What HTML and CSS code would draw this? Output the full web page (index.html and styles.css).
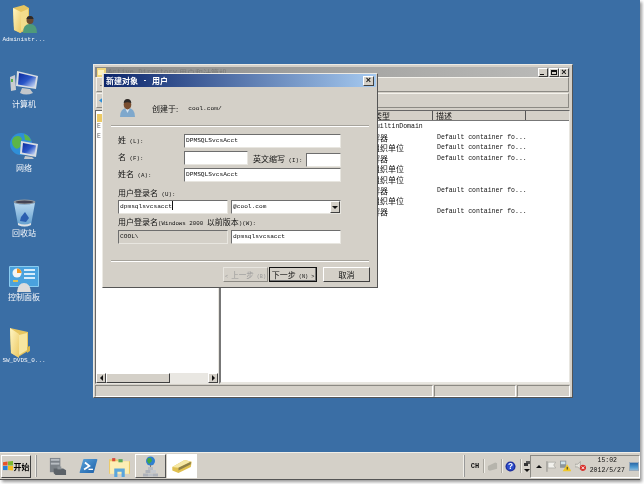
FILE: index.html
```html
<!DOCTYPE html>
<html lang="zh-CN">
<head>
<meta charset="utf-8">
<title>新建对象 - 用户</title>
<link rel="stylesheet" href="styles.css">
</head>
<body>
<svg class="defs" width="0" height="0"><defs>
  <linearGradient id="scr" x1="0" y1="0" x2="1" y2="1"><stop offset="0" stop-color="#0c2a9c"/><stop offset=".5" stop-color="#2a56c8"/><stop offset="1" stop-color="#e4eefa"/></linearGradient>
  <linearGradient id="fold" x1="0" y1="0" x2="1" y2="1"><stop offset="0" stop-color="#fff6c4"/><stop offset="1" stop-color="#ecc964"/></linearGradient>
  <linearGradient id="bin" x1="0" y1="0" x2="0" y2="1"><stop offset="0" stop-color="#b8d8f0"/><stop offset="1" stop-color="#5f9ccc"/></linearGradient>
  <linearGradient id="ps" x1="0" y1="0" x2="1" y2="1"><stop offset="0" stop-color="#5aa4dc"/><stop offset="1" stop-color="#1c5ea6"/></linearGradient>
</defs></svg>
<div class="screen">
  <main class="desktop">
    <div class="icon icon-admin">
      <svg width="25" height="28" viewBox="0 0 25 28"><path d="M1 3 L12 0 L17 3 L17 24 L8 28 L2 25Z" fill="#e6c560"/><path d="M1 3 L9 7 L9 28 L2 25Z" fill="url(#fold)"/><path d="M9 7 L16 4 L16 22 L9 26Z" fill="#f3dd8c"/><ellipse cx="18" cy="15" rx="3.500" ry="4" fill="#6b4a30"/><path d="M18 11 q3 0 3.500 3 l-7 0 q.5-3 3.500-3Z" fill="#2e2a28"/><path d="M11 28 q0-9 7-9 q7 0 7 9Z" fill="#4f9a7a"/></svg>
      <span class="mono light">Administr...</span>
    </div>
    <div class="icon icon-computer">
      <svg width="28" height="25" viewBox="0 0 28 25"><path d="M0 6 L5 4 L6 19 L1 20Z" fill="#c9ccd0"/><rect x="1" y="8" width="2" height="3" fill="#5ab04a"/><path d="M7 0 L28 5 L26 18 L6 15Z" fill="#d8dde2"/><path d="M9 2 L26 6 L24.500 16.500 L8 13.500Z" fill="url(#scr)"/><path d="M12 17 L20 18 L23 22 Q16 25 10 22Z" fill="#c3c7cb"/></svg>
      <span class="cjk light">计算机</span>
    </div>
    <div class="icon icon-network">
      <svg width="28" height="27" viewBox="0 0 28 27"><circle cx="11" cy="11" r="11" fill="#2f8fd8"/><path d="M4 4 Q10 1 12 6 Q9 10 11 13 Q7 18 4 14 Q0 9 4 4Z" fill="#5cb548"/><path d="M14 1 Q20 3 21 8 L15 7Z" fill="#5cb548"/><path d="M11 8 L28 11 L26 24 L10 21Z" fill="#d8dde2"/><path d="M13 10 L26 12.500 L24.500 22 L12 19.500Z" fill="url(#scr)"/><path d="M15 23 L22 24 L24 26 L14 26Z" fill="#c3c7cb"/></svg>
      <span class="cjk light">网络</span>
    </div>
    <div class="icon icon-bin">
      <svg width="23" height="30" viewBox="0 0 23 30"><ellipse cx="11.500" cy="4" rx="11" ry="2.500" fill="#8f979e"/><ellipse cx="11.500" cy="4" rx="9" ry="1.500" fill="#445"/><path d="M1 5 L5 27 Q11.500 30 18 27 L22 5 Q11.500 8 1 5Z" fill="url(#bin)"/><path d="M8 19 L12 14 L16 20 L13 24 L7 23Z" fill="#2c5fb0"/><path d="M5 25 Q11.500 28 18 25 L18 27 Q11.500 30 5 27Z" fill="#e0e2e4"/></svg>
      <span class="cjk light">回收站</span>
    </div>
    <div class="icon icon-panel">
      <svg width="30" height="27" viewBox="0 0 30 27"><rect x="0" y="0" width="30" height="21" rx="1" fill="#8accf0"/><rect x="1" y="1" width="28" height="19" fill="#4aa2de"/><circle cx="8" cy="7" r="4.500" fill="#f4f4f4"/><path d="M8 7 V2.500 A4.500 4.500 0 0 1 12.500 7Z" fill="#f09a28"/><rect x="15" y="3" width="11" height="2" fill="#d6ecfa"/><rect x="15" y="7" width="11" height="2" fill="#d6ecfa"/><rect x="15" y="11" width="11" height="2" fill="#d6ecfa"/><rect x="4" y="14" width="5" height="2" fill="#e0c050"/><path d="M8 26 Q9 17 15 17 Q21 17 22 26Z" fill="#dcdcdc"/></svg>
      <span class="cjk light">控制面板</span>
    </div>
    <div class="icon icon-sw">
      <svg width="20" height="31" viewBox="0 0 20 31"><path d="M0 1 L9 3 L18 5 L18 24 L8 30 L1 26Z" fill="#e6c560"/><path d="M0 1 L9 7 L9 31 L1 26Z" fill="url(#fold)"/><path d="M9 8 L17 6 L17 23 L9 28Z" fill="#f7e6a0"/><path d="M17 20 L20 19 L20 24 L17 26Z" fill="#d8b850"/></svg>
      <span class="mono light">SW_DVDS_0...</span>
    </div>

    <section class="window main-window">
      <header class="win-title">
        <svg class="win-app" width="9" height="9" viewBox="0 0 9 9"><rect width="9" height="9" fill="#f0d67c"/><rect x="1" y="2" width="6" height="5" fill="#fff4c0"/></svg>
        <span class="mono faded title-mono">Active Directory</span>
        <span class="cjk faded">用户和计算机</span>
        <div class="win-controls">
          <span class="ctl"><i class="min"></i></span>
          <span class="ctl"><i class="max"></i></span>
          <span class="ctl x">×</span>
        </div>
      </header>
      <div class="bar bar-first"><span class="mono">.</span></div>
      <div class="bar">
        <svg width="7" height="9" viewBox="0 0 7 9"><path d="M6 0 L0 4.500 L6 9Z" fill="#2d8fd8"/></svg>
      </div>
      <div class="panes">
        <aside class="tree">
          <div class="tree-body">
            <div class="tree-row"><svg width="8" height="8" viewBox="0 0 8 8"><rect width="8" height="8" fill="#ecc964"/></svg></div>
            <div class="tree-row mono">E</div>
            <div class="tree-row mono">E</div>
          </div>
          <div class="hscroll">
            <span class="arrow"><i class="tri-l"></i></span>
            <span class="thumb"></span>
            <span class="track"></span>
            <span class="arrow"><i class="tri-r"></i></span>
          </div>
        </aside>
        <div class="list">
          <div class="list-head">
            <span class="col col-type"><span class="cjk">类型</span></span>
            <span class="col col-desc"><span class="cjk">描述</span></span>
            <span class="col col-rest"></span>
          </div>
          <div class="list-row"><span class="cell-type mono">builtinDomain</span></div>
          <div class="list-row"><span class="cell-type cjk">容器</span><span class="cell-desc mono">Default container fo...</span></div>
          <div class="list-row"><span class="cell-type cjk">组织单位</span><span class="cell-desc mono">Default container fo...</span></div>
          <div class="list-row"><span class="cell-type cjk">容器</span><span class="cell-desc mono">Default container fo...</span></div>
          <div class="list-row"><span class="cell-type cjk">组织单位</span></div>
          <div class="list-row"><span class="cell-type cjk">组织单位</span></div>
          <div class="list-row"><span class="cell-type cjk">容器</span><span class="cell-desc mono">Default container fo...</span></div>
          <div class="list-row"><span class="cell-type cjk">组织单位</span></div>
          <div class="list-row"><span class="cell-type cjk">容器</span><span class="cell-desc mono">Default container fo...</span></div>
        </div>
      </div>
      <footer class="status">
        <span class="st st-a"></span><span class="st st-b"></span><span class="st st-c"></span>
      </footer>
    </section>

    <section class="window dialog">
      <header class="dlg-title">
        <span class="cjk bold">新建对象</span><span class="mono bold dash">-</span><span class="cjk bold">用户</span>
        <span class="ctl dlg-x">×</span>
      </header>
      <div class="dlg-body">
        <div class="created">
          <svg width="15" height="20" viewBox="0 0 15 18"><path d="M0 18 Q0 9 7.500 9 Q15 9 15 18Z" fill="#7fa8cc"/><path d="M5 9 L7.500 14 L10 9Z" fill="#d6e4ef"/><ellipse cx="7.500" cy="5.500" rx="3.800" ry="5" fill="#7a4e30"/><path d="M3.700 4 Q4 0 7.500 0 Q11 0 11.300 4 Q7.500 2.500 3.700 4Z" fill="#2e2a28"/></svg>
          <span class="cjk">创建于:</span>
          <span class="mono created-path">cool.com/</span>
        </div>
        <div class="rule"></div>
        <div class="form">
          <div class="frow">
            <label class="flabel"><span class="cjk">姓</span><span class="mono"> (L):</span></label>
            <div class="input w-full mono">DPMSQLSvcsAcct</div>
          </div>
          <div class="frow">
            <label class="flabel"><span class="cjk">名</span><span class="mono"> (F):</span></label>
            <div class="input w-first"></div>
            <label class="ini-label"><span class="cjk">英文缩写</span><span class="mono"> (I):</span></label>
            <div class="input w-ini"></div>
          </div>
          <div class="frow">
            <label class="flabel"><span class="cjk">姓名</span><span class="mono"> (A):</span></label>
            <div class="input w-full mono">DPMSQLSvcsAcct</div>
          </div>
        </div>
        <div class="blk-label"><span class="cjk">用户登录名</span><span class="mono"> (U):</span></div>
        <div class="login-row">
          <div class="input w-half mono">dpmsqlsvcsacct<i class="caret"></i></div>
          <div class="input w-half select mono">@cool.com<span class="drop"><i class="tri-d"></i></span></div>
        </div>
        <div class="blk-label second"><span class="cjk">用户登录名</span><span class="mono">(Windows 2000 </span><span class="cjk">以前版本</span><span class="mono">)(W):</span></div>
        <div class="login-row">
          <div class="input w-half disabled mono">COOL\</div>
          <div class="input w-half mono">dpmsqlsvcsacct</div>
        </div>
        <div class="rule rule-bottom"></div>
        <div class="buttons">
          <button class="btn off"><span class="mono">&lt; </span><span class="cjk">上一步</span><span class="mono"> (B)</span></button>
          <button class="btn default"><span class="cjk">下一步</span><span class="mono"> (N) &gt;</span></button>
          <button class="btn cancel"><span class="cjk">取消</span></button>
        </div>
      </div>
    </section>
  </main>

  <nav class="taskbar">
    <button class="start">
      <svg width="10" height="10" viewBox="0 0 11 11"><path d="M0 1.500 L5 .5 V5 H0Z" fill="#e8532b"/><path d="M5.500 .5 L11 0 V5 H5.500Z" fill="#7cb82f"/><path d="M0 5.500 H5 V10 L0 10Z" fill="#2a7fd8"/><path d="M5.500 5.500 H11 V10.500 L5.500 10Z" fill="#f6c021"/></svg>
      <span class="cjk bold">开始</span>
    </button>
    <span class="grip"></span>
    <div class="tasks">
      <span class="task"><svg width="19" height="21" viewBox="0 0 20 20"><rect x="2" y="1" width="11" height="15" fill="#7c8288"/><rect x="3" y="2" width="9" height="2" fill="#b8bdc2"/><rect x="3" y="6" width="9" height="2" fill="#b8bdc2"/><path d="M6 12 H16 L19 14 V19 H8 L6 17Z" fill="#5c6268"/><rect x="10" y="10" width="4" height="3" fill="#8e9499"/></svg></span>
      <span class="task"><svg width="19" height="16" viewBox="0 0 20 18"><path d="M4 2 Q4 1 5 1 H19 Q20 1 20 2 L16 16 Q16 17 15 17 H1 Q0 17 0 16Z" fill="url(#ps)"/><path d="M6 5 L11 9 L5 13" fill="none" stroke="#fff" stroke-width="2"/><rect x="10" y="12" width="5" height="1.500" fill="#fff"/></svg></span>
      <span class="task"><svg width="21" height="21" viewBox="0 0 20 20"><path d="M0 3 H8 L9 5 H20 V17 H0Z" fill="#eccb6c"/><path d="M1 5 H19 V17 H1Z" fill="#fdeeb4"/><rect x="3" y="2" width="3" height="3" fill="#d84a3a"/><rect x="9" y="3" width="4" height="3" fill="#5aa858"/><path d="M5 12 H15 V20 H12 V15 H8 V20 H5Z" fill="#5ba6dc"/></svg></span>
      <span class="task active-raised"><svg width="17" height="21" viewBox="0 0 17 21"><circle cx="8.500" cy="5" r="4.500" fill="#2f7fd0"/><path d="M6 2 L9 2 L10 5 L7 8 L5 5Z" fill="#44a840"/><rect x="8" y="9" width="1" height="3" fill="#777"/><rect x="6" y="11" width="5" height="3" fill="#b8bcc4"/><rect x="3.500" y="14" width="5" height="3" fill="#aeb2ba"/><rect x="9" y="14" width="5" height="3" fill="#c4c8ce"/><rect x="1" y="17.500" width="5" height="3" fill="#aeb2ba"/><rect x="6" y="17.500" width="5" height="3" fill="#bcc0c6"/><rect x="11" y="17.500" width="5" height="3" fill="#aeb2ba"/></svg></span>
      <span class="task active-on"><svg width="22" height="15" viewBox="0 0 22 17"><path d="M0 9 L14 1 L22 3 L21 9 L7 16 L0 13Z" fill="#e0c050"/><path d="M0 9 L14 1 L21 3 L7 10Z" fill="#f6e8a6"/><path d="M7 10 L21 3 L21 6 L7 13Z" fill="#8d7f48"/></svg></span>
    </div>
    <div class="tray-left">
      <span class="grip"></span>
      <span class="mono lang">CH</span>
      <span class="sep"></span>
      <svg width="11" height="11" viewBox="0 0 12 11"><path d="M1 5 L9 1 L11 2 V8 L3 10 L1 9Z" fill="#b6b4ac"/></svg>
      <span class="sep"></span>
      <svg width="11" height="11" viewBox="0 0 12 12"><circle cx="6" cy="6" r="5.500" fill="#1f2f9c"/><circle cx="6" cy="6" r="4" fill="#2c4dcc"/><text x="6" y="9" class="svg-q" text-anchor="middle">?</text></svg>
      <span class="sep"></span>
      <span class="mini"><svg width="6" height="5" viewBox="0 0 6 5"><rect x="2" y="0" width="4" height="3" fill="#555"/><rect x="0" y="2" width="4" height="3" fill="#333"/></svg><i class="tri-d"></i></span>
    </div>
    <div class="tray">
      <i class="tri-up"></i>
      <svg width="11" height="11" viewBox="0 0 11 11"><path d="M1 0 V11" stroke="#8a8a84" stroke-width="1"/><path d="M2 1 H10 L8 4 L10 7 H2Z" fill="#f2f1ec" stroke="#9a9a94" stroke-width=".6"/></svg>
      <svg width="12" height="12" viewBox="0 0 13 12"><rect x="0" y="0" width="7" height="8" fill="#8c969c"/><rect x="1" y="1" width="5" height="3" fill="#cfe2ea"/><path d="M8 4 L13 12 H3Z" fill="#f0c828"/><rect x="7.600" y="7" width="1" height="3" fill="#222"/></svg>
      <svg width="12" height="12" viewBox="0 0 13 12"><path d="M0 4 H3 L6 1 V10 L3 7 H0Z" fill="#e6e4dc" stroke="#8a8a84" stroke-width=".6"/><circle cx="9" cy="8" r="3.500" fill="#d8302c"/><path d="M7.500 6.500 L10.500 9.500 M10.500 6.500 L7.500 9.500" stroke="#fff"/></svg>
      <div class="clock"><span class="mono">15:02</span><span class="mono">2012/5/27</span></div>
      <span class="show-desk"></span>
    </div>
  </nav>
</div>
</body>
</html>
```
FILE: styles.css
```css
* { box-sizing: border-box; }
html, body { margin: 0; padding: 0; background: #fff; }
body { width: 644px; height: 484px; overflow: hidden; }
.defs { position: absolute; }
.screen { width: 640px; height: 480px; display: flex; flex-direction: column; box-shadow: 2px 2px 3px #9a9a9a; filter: blur(.25px); }
.mono { font-family: "Liberation Mono", monospace; font-size: 6.5px; white-space: pre; }
.cjk { font-family: "Noto Sans CJK SC", sans-serif; font-size: 8px; white-space: pre; }
.bold { font-weight: 700; }
.light { color: #f4f6fa; }
.faded { color: #7c7c7a; }
button { font: inherit; margin: 0; padding: 0; }

.desktop { position: relative; flex: 1; background: #3a6ea5; color: #111; }

.icon { position: absolute; left: 0; width: 48px; display: flex; flex-direction: column; align-items: center; line-height: 10px; }
.icon svg { display: block; }
.icon .mono { font-size: 6px; }
.icon-admin { top: 5px; }
.icon-admin svg { margin-bottom: 2px; }
.icon-computer { top: 71px; }
.icon-computer svg { margin-bottom: 3px; }
.icon-network { top: 133px; }
.icon-network svg { margin-bottom: 3px; }
.icon-bin { top: 198px; }
.icon-panel { top: 266px; }
.icon-panel svg { margin-bottom: -1px; }
.icon-sw { top: 327px; }
.icon-sw svg { margin-bottom: -2px; margin-right: 8px; }

.window { position: absolute; background: #d4d0c8; border: 1px solid #eceae4; border-right-color: #555; border-bottom-color: #555; }
.main-window { left: 93px; top: 64px; width: 480px; height: 334px; padding: 2px 2px 0 1px; display: flex; flex-direction: column; }
.win-title { height: 10px; flex: none; display: flex; align-items: center; gap: 2px; padding-left: 2px; background: linear-gradient(90deg, #8a8a88, #bcbcba); }
.title-mono { font-size: 7.200px; }
.win-controls { margin-left: auto; display: flex; gap: .5px; margin-right: 1px; }
.ctl { width: 10px; height: 9px; display: flex; align-items: center; justify-content: center; background: #d4d0c8; border: 1px solid; border-color: #fff #404040 #404040 #fff; font: 700 9px/7px "Liberation Sans", sans-serif; color: #111; }
.min { width: 4px; height: 1px; background: #111; margin-top: 4px; margin-right: 2px; }
.max { width: 6px; height: 5px; border: 1px solid #111; border-top-width: 2px; }
.bar { height: 15px; flex: none; margin: 1px 1px 0; display: flex; align-items: center; padding-left: 2px; border: 1px solid; border-color: #f4f2ec #8c8a84 #8c8a84 #f4f2ec; background: #d4d0c8; }
.bar-first { margin-top: 0; }
.panes { flex: 1; display: flex; min-height: 0; margin-top: 2px; }
.tree { width: 124px; flex: none; display: flex; flex-direction: column; background: #fff; border: 1px solid; border-color: #666 #e8e6e0 #e8e6e0 #666; }
.tree-body { flex: 1; padding: 1px 0 0 1px; }
.tree-row { height: 10px; color: #666; line-height: 10px; }
.hscroll { height: 10px; flex: none; display: flex; }
.arrow { width: 10px; flex: none; display: flex; align-items: center; justify-content: center; background: #d4d0c8; border: 1px solid; border-color: #fff #404040 #404040 #fff; }
.thumb { width: 64px; background: #d4d0c8; border: 1px solid; border-color: #fff #404040 #404040 #fff; }
.track { flex: 1; background: #e9e7e2; }
.tri-l, .tri-r, .tri-d, .tri-up { display: block; width: 0; height: 0; border-style: solid; border-color: transparent; }
.tri-l { border-width: 3px 3px 3px 0; border-right-color: #111; }
.tri-r { border-width: 3px 0 3px 3px; border-left-color: #111; }
.tri-d { border-width: 3px 3px 0 3px; border-top-color: #111; }
.tri-up { border-width: 0 3px 3px 3px; border-bottom-color: #111; }

.list { flex: 1; background: #fff; border-left: 2px solid #777; border-top: 1px solid #666; border-right: 1px solid #e8e6e0; border-bottom: 2px solid #e8e6e0; }
.list-head { display: flex; height: 10px; background: #d4d0c8; border-bottom: 1px solid #777; margin-bottom: 1px; line-height: 9px; }
.col { height: 9px; padding-left: 3px; border-right: 1px solid #555; }
.col-type { width: 212px; padding-left: 153px; }
.col-desc { width: 93px; }
.col-rest { flex: 1; border: 0; }
.list-head .cjk { display: block; line-height: 9px; }
.list-row { position: relative; height: 10.6px; line-height: 10.6px; color: #111; }
.cell-type { position: absolute; left: 151px; top: 0; }
.cell-desc { position: absolute; left: 216px; top: 0; }

.status { height: 12px; flex: none; margin-top: 1px; display: flex; gap: 1px; }
.st { border: 1px solid; border-color: #8c8a84 #fff #fff #8c8a84; }
.st-a { width: 338px; }
.st-b { width: 82px; }
.st-c { flex: 1; }

.dialog { left: 102px; top: 73px; width: 276px; height: 215px; padding: 0 1px 1px; display: flex; flex-direction: column; }
.dlg-title { height: 13px; flex: none; display: flex; align-items: center; padding-left: 2px; background: linear-gradient(90deg, #0a246a, #a6caf0); color: #fff; }
.dash { margin: 0 5px; }
.dlg-x { margin-left: auto; margin-right: 2px; width: 11px; height: 10px; }
.dlg-body { flex: 1; padding: 0 6px 0 7px; display: flex; flex-direction: column; color: #111; }
.created { height: 38px; flex: none; display: flex; align-items: center; padding-left: 9px; padding-top: 4px; }
.created svg { margin-right: 17px; }
.created-path { margin-left: 10px; color: #111; font-size: 6.200px; }
.rule { height: 2px; flex: none; background: #a6a39c; border-bottom: 1px solid #fff; margin-right: 1px; }
.form { margin-top: 7px; display: flex; flex-direction: column; gap: 3px; }
.frow { display: flex; align-items: flex-start; height: 14px; }
.flabel { width: 73px; height: 12px; line-height: 12px; padding-left: 7px; flex: none; display: flex; align-items: baseline; }
.flabel .mono, .ini-label .mono, .blk-label .mono { font-size: 5.800px; }
.btn .mono { font-size: 5.200px; }
.input { background: #fff; height: 14px; border: 1px solid; border-color: #6e6e6e #e8e6e0 #e8e6e0 #6e6e6e; padding-left: 1px; line-height: 12px; position: relative; color: #111; font-size: 6.200px; }
.w-full { width: 157px; }
.w-first { width: 64px; }
.ini-label { width: 58px; height: 16px; line-height: 16px; padding-left: 5px; flex: none; white-space: pre; display: flex; align-items: baseline; }
.w-ini { width: 35px; margin-top: 2px; }
.blk-label { margin-top: 6px; height: 10px; line-height: 10px; padding-left: 7px; flex: none; display: flex; align-items: baseline; }
.blk-label.second { margin-top: 3px; }
.login-row { display: flex; gap: 3px; padding-left: 7px; margin-top: 2px; flex: none; }
.blk-label.second + .login-row { margin-top: 3px; }
.w-half { width: 110px; }
.disabled { background: #d4d0c8; }
.caret { display: inline-block; width: 1px; height: 9px; background: #111; vertical-align: -2px; }
.drop { position: absolute; right: 0; top: 0; width: 10px; height: 12px; display: flex; align-items: center; justify-content: center; background: #d4d0c8; border: 1px solid; border-color: #fff #404040 #404040 #fff; }
.rule-bottom { margin-top: 16px; }
.buttons { display: flex; justify-content: flex-end; margin-top: 5px; }
.btn { height: 15px; line-height: 13px; flex: none; background: #d4d0c8; border: 1px solid; border-color: #fff #404040 #404040 #fff; display: flex; align-items: baseline; justify-content: center; color: #111; overflow: hidden; }
.off { width: 45px; margin-right: 1px; color: #999; border-color: #e8e6e0 #8c8a84 #8c8a84 #e8e6e0; }
.off .cjk { font-size: 7.500px; }
.default { width: 48px; border: 1px solid #111; box-shadow: inset -1px -1px 0 #777; }
.cancel { width: 47px; margin-left: 6px; }

.taskbar { height: 28px; flex: none; display: flex; align-items: center; background: #d4d0c8; border-top: 1px solid #f0eee8; box-shadow: inset 0 -1px 0 #555; padding-bottom: 1px; color: #111; }
.start { width: 30px; height: 23px; margin-left: 1px; display: flex; align-items: center; justify-content: center; gap: 1px; background: #d4d0c8; border: 1px solid; border-color: #fff #404040 #404040 #fff; }
.grip { width: 2px; height: 22px; flex: none; background: #f0eee8; border-right: 1px solid #999; margin-left: 4px; }
.tasks { display: flex; margin-left: 4px; align-items: center; }
.task { width: 32px; height: 24px; display: flex; align-items: center; justify-content: center; }
.task:nth-child(2) { width: 30px; }
.active-raised { width: 31px; border: 1px solid; border-color: #fff #555 #555 #fff; }
.active-on { width: 30px; background: #fff; margin-left: 1px; }
.tray-left { margin-left: auto; display: flex; align-items: center; gap: 3.300px; }
.tray-left .grip { margin-left: 0; margin-right: 3px; }
.lang { font-weight: 700; font-size: 7px; }
.sep { width: 1px; height: 14px; background: #aaa79f; box-shadow: 1px 0 0 #f0eee8; }
.svg-q { font: 700 9px "Liberation Sans", sans-serif; fill: #fff; }
.mini { display: flex; flex-direction: column; align-items: center; gap: 3px; }
.tray { display: flex; align-items: center; width: 110px; height: 23px; padding-left: 5px; gap: 3.500px; border: 1px solid; border-color: #8c8a84 #fff #fff #8c8a84; }
.clock { display: flex; flex-direction: column; align-items: center; line-height: 10px; width: 36px; color: #111; }
.show-desk { width: 10px; height: 9px; background: linear-gradient(#2c6aa8, #4f9ad0 60%, #8ab8d8); border: 1px solid #9ab; margin-left: 1px; }
```
